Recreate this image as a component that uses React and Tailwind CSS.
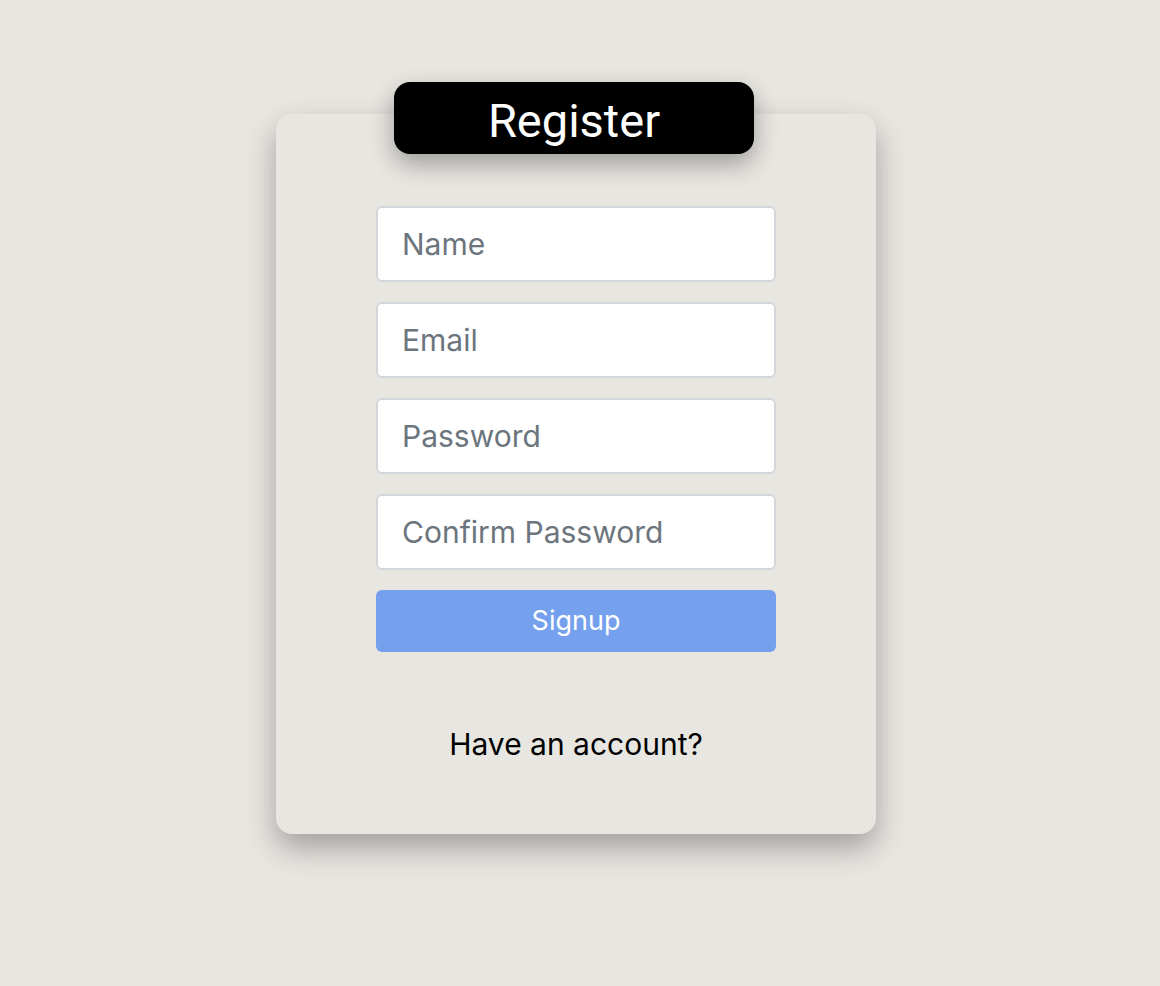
export default function App() {
  const fields = ['Name', 'Email', 'Password', 'Confirm Password'];

  return (
    <div className="min-h-screen bg-[#e8e6e1] flex justify-center pr-2 pt-[114px] font-['Inter',sans-serif]">
      <div className="w-[600px] h-[720px] bg-[#e8e6e1] rounded-2xl shadow-[0_14px_30px_rgba(0,0,0,0.3)] flex flex-col items-center">
        <div className="-mt-8 ml-[-4px] w-[360px] h-[72px] bg-black rounded-2xl shadow-[0_10px_24px_rgba(0,0,0,0.32)] flex items-center justify-center">
          <h1 className="text-white text-[47px] font-['Roboto',sans-serif] leading-none mt-1">Register</h1>
        </div>

        <form className="mt-[52px] w-[400px] flex flex-col gap-5" onSubmit={(e) => e.preventDefault()}>
          {fields.map((f) => (
            <input
              key={f}
              type={f.includes('Password') ? 'password' : 'text'}
              placeholder={f}
              className="h-[76px] w-full bg-white border-2 border-[#d3d6da] rounded-md px-6 text-[30px] text-[#212529] placeholder:text-[#6c757d] outline-none"
            />
          ))}
          <button
            type="submit"
            className="h-[62px] w-full bg-[#74a0ee] rounded-md text-white text-[27px]"
          >
            Signup
          </button>
        </form>

        <p className="mt-[75px] text-[30px] text-black leading-[34px]">Have an account?</p>
      </div>
    </div>
  );
}
